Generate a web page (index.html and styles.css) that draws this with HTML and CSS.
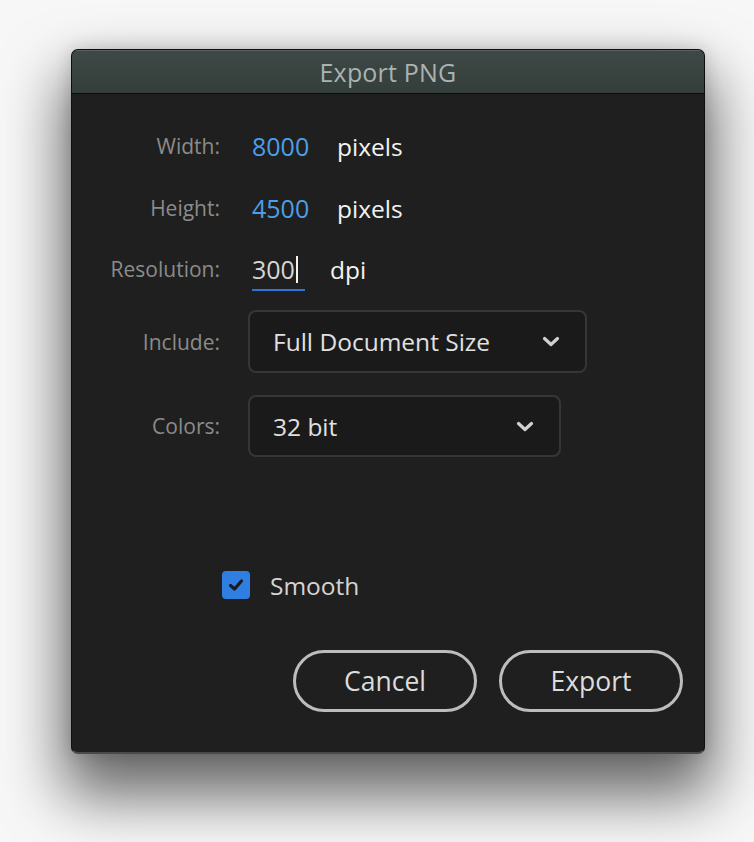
FILE: index.html
```html
<!DOCTYPE html>
<html>
<head>
<meta charset="utf-8">
<link rel="stylesheet" href="styles.css">
</head>
<body>
<div class="window">
  <div class="titlebar">Export PNG</div>
  <div class="content">
    <div class="row row-w">
      <span class="label">Width:</span>
      <span class="value">8000</span>
      <span class="unit">pixels</span>
    </div>
    <div class="row row-h">
      <span class="label">Height:</span>
      <span class="value">4500</span>
      <span class="unit">pixels</span>
    </div>
    <div class="row row-r">
      <span class="label">Resolution:</span>
      <span class="input"><span class="input-text">300</span><span class="caret"></span></span>
      <span class="unit">dpi</span>
    </div>
    <div class="row row-inc">
      <span class="label">Include:</span>
      <div class="select select-wide">
        <span>Full Document Size</span>
        <svg class="chev" width="18" height="11" viewBox="0 0 18 11"><path d="M2.5 2.5 L9 8.5 L15.5 2.5" fill="none" stroke="#d0d0d0" stroke-width="3.2" stroke-linecap="round" stroke-linejoin="round"/></svg>
      </div>
    </div>
    <div class="row row-col">
      <span class="label">Colors:</span>
      <div class="select select-narrow">
        <span>32 bit</span>
        <svg class="chev" width="18" height="11" viewBox="0 0 18 11"><path d="M2.5 2.5 L9 8.5 L15.5 2.5" fill="none" stroke="#d0d0d0" stroke-width="3.2" stroke-linecap="round" stroke-linejoin="round"/></svg>
      </div>
    </div>
    <div class="check-row">
      <span class="checkbox">
        <svg width="18" height="18" viewBox="0 0 18 18"><path d="M3.5 9.5 L7.5 13 L14.5 5" fill="none" stroke="#1b1b1b" stroke-width="3.2" stroke-linecap="round" stroke-linejoin="round"/></svg>
      </span>
      <span class="check-label">Smooth</span>
    </div>
    <div class="buttons">
      <button class="btn">Cancel</button>
      <button class="btn">Export</button>
    </div>
  </div>
</div>
</body>
</html>
```

FILE: styles.css
```css
html, body {
  margin: 0;
  padding: 0;
}
body {
  background: #f7f7f7;
  font-family: "Open Sans", "Noto Sans", "Liberation Sans", sans-serif;
  padding: 49px 0 0 71px;
  height: 842px;
  box-sizing: border-box;
  overflow: hidden;
}
.window {
  width: 634px;
  height: 705px;
  box-sizing: border-box;
  border: 1px solid #0e0e0e;
  border-bottom: 2px solid #4a4a4a;
  border-radius: 7px;
  background: #1f1f1f;
  overflow: hidden;
  box-shadow: 0 34px 60px 8px rgba(0, 0, 0, 0.58), 0 0 18px rgba(0,0,0,0.16);
  display: flex;
  flex-direction: column;
}
.titlebar {
  height: 43px;
  border-bottom: 1px solid #0c0c0c;
  background: linear-gradient(#3e4846, #343e3b);
  color: #a9b3b1;
  font-size: 25px;
  letter-spacing: 0.2px;
  display: flex;
  align-items: center;
  justify-content: center;
  flex: none;
  box-shadow: inset 0 1px 0 #5a6361;
}
.content {
  flex: 1;
  display: flex;
  flex-direction: column;
  padding-top: 30px;
}
.row {
  display: flex;
  align-items: center;
  height: 44px;
}
.row-h { margin-top: 18px; }
.row-r { margin-top: 17px; }
.row-inc { margin-top: 19px; height: 63px; }
.row-col { margin-top: 22px; height: 62px; }
.label {
  width: 148px;
  text-align: right;
  color: #8b8b8b;
  font-size: 21px;
  margin-right: 28px;
  flex: none;
}
.value {
  color: #4c9fe6;
  font-size: 25px;
  width: 85px;
  padding-left: 4px;
}
.unit {
  color: #f3f3f3;
  font-size: 24.5px;
}
.input {
  position: relative;
  width: 53px;
  height: 44px;
  box-sizing: border-box;
  border-bottom: 2px solid #2e73d8;
  display: flex;
  align-items: center;
  margin-left: 4px;
  margin-right: 25px;
  padding-left: 0;
  padding-top: 2px;
}
.input-text {
  color: #d6d6d6;
  font-size: 25px;
}
.caret {
  display: inline-block;
  width: 2px;
  height: 27px;
  background: #f2f2f2;
  margin-left: 1px;
}
.select {
  height: 100%;
  box-sizing: border-box;
  border: 2px solid #363636;
  border-radius: 8px;
  background: #1a1a1a;
  display: flex;
  align-items: center;
  justify-content: space-between;
  padding: 0 25px 0 23px;
  color: #e0e0e0;
  font-size: 24.5px;
}
.select-wide { width: 339px; }
.select-narrow { width: 313px; }
.chev { flex: none; }
.check-row {
  display: flex;
  align-items: center;
  margin-top: 114px;
  padding-left: 150px;
  height: 28px;
}
.checkbox {
  width: 28px;
  height: 28px;
  border-radius: 4px;
  background: #2f7fe3;
  display: flex;
  align-items: center;
  justify-content: center;
  margin-right: 20px;
}
.check-label {
  color: #d4d4d4;
  font-size: 24.5px;
}
.buttons {
  display: flex;
  justify-content: flex-end;
  gap: 22px;
  margin-top: 51px;
  padding-right: 21px;
}
.btn {
  width: 184px;
  height: 62px;
  border-radius: 31px;
  border: 3px solid #bdbdbd;
  background: transparent;
  color: #dcdcdc;
  font-family: inherit;
  font-size: 26.5px;
  padding: 0;
}
```
